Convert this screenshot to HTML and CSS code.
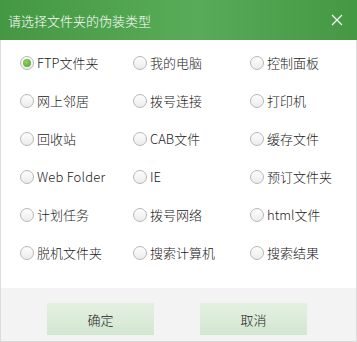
FILE: index.html
```html
<!DOCTYPE html>
<html lang="zh">
<head>
<meta charset="utf-8">
<link rel="stylesheet" href="styles.css">
</head>
<body>
<div class="dialog">
  <div class="titlebar">
    <span class="title">请选择文件夹的伪装类型</span>
    <svg class="close" width="12" height="12" viewBox="0 0 12 12"><path d="M1 1L11 11M11 1L1 11" stroke="#fff" stroke-width="1.2" fill="none"/></svg>
  </div>
  <div class="content">
    <div class="grid">
      <label class="opt"><span class="radio checked"></span>FTP文件夹</label>
      <label class="opt"><span class="radio"></span>我的电脑</label>
      <label class="opt"><span class="radio"></span>控制面板</label>
      <label class="opt"><span class="radio"></span>网上邻居</label>
      <label class="opt"><span class="radio"></span>拨号连接</label>
      <label class="opt"><span class="radio"></span>打印机</label>
      <label class="opt"><span class="radio"></span>回收站</label>
      <label class="opt"><span class="radio"></span>CAB文件</label>
      <label class="opt"><span class="radio"></span>缓存文件</label>
      <label class="opt"><span class="radio"></span><span class="latin">Web Folder</span></label>
      <label class="opt"><span class="radio"></span>IE</label>
      <label class="opt"><span class="radio"></span>预订文件夹</label>
      <label class="opt"><span class="radio"></span>计划任务</label>
      <label class="opt"><span class="radio"></span>拨号网络</label>
      <label class="opt"><span class="radio"></span>html文件</label>
      <label class="opt"><span class="radio"></span>脱机文件夹</label>
      <label class="opt"><span class="radio"></span>搜索计算机</label>
      <label class="opt"><span class="radio"></span>搜索结果</label>
    </div>
  </div>
  <div class="footer">
    <button class="btn">确定</button>
    <button class="btn">取消</button>
  </div>
</div>
</body>
</html>
```
FILE: styles.css
```css
* { box-sizing: border-box; }
html, body { margin: 0; padding: 0; background: #fff; }
body {
  font-family: "Microsoft YaHei", "Noto Sans CJK SC", "Noto Sans", sans-serif;
  font-size: 13px;
  font-weight: 300;
  color: #222;
}
.dialog {
  width: 357px;
  height: 342px;
  display: flex;
  flex-direction: column;
  border-left: 1px solid #dcdcdc;
  border-right: 1px solid #dcdcdc;
  border-bottom: 1px solid #d8d8d8;
  background: #fff;
}
.titlebar {
  height: 40px;
  margin: 0 -1px;
  flex: none;
  display: flex;
  align-items: center;
  justify-content: space-between;
  padding: 0 14px 0 8px;
  background: linear-gradient(90deg, #449844 0%, #55a955 45%, #58ab58 55%, #449844 100%);
  color: #fff;
}
.title { font-size: 13px; line-height: 16px; margin-top: 1px; }
.close { display: block; }
.content {
  flex: 1;
  padding: 4px 0 0 19px;
}
.grid {
  display: grid;
  grid-template-columns: 113px 117px 1fr;
  grid-auto-rows: 38px;
}
.opt {
  display: flex;
  align-items: center;
  line-height: 16px;
}
.latin { letter-spacing: 0.2px; }
.radio {
  width: 14px;
  height: 14px;
  border-radius: 50%;
  border: 1px solid #b8b8b8;
  background: linear-gradient(#fdfdfd, #ececec);
  margin-right: 3px;
  flex: none;
  display: flex;
  align-items: center;
  justify-content: center;
}
.radio.checked::after {
  content: "";
  width: 8px;
  height: 8px;
  border-radius: 50%;
  background: radial-gradient(circle at 40% 35%, #8fd35a, #4ea62a);
}
.footer {
  flex: none;
  height: 53px;
  background: #f3f3f3;
  display: flex;
  align-items: flex-start;
  padding: 15px 0 0 46px;
  gap: 46px;
}
.btn {
  width: 107px;
  height: 32px;
  border: none;
  background: linear-gradient(#e3f0e1, #d3e7d1);
  font-family: inherit;
  font-size: 13px;
  font-weight: 300;
  color: #222;
  padding: 0;
}
```
